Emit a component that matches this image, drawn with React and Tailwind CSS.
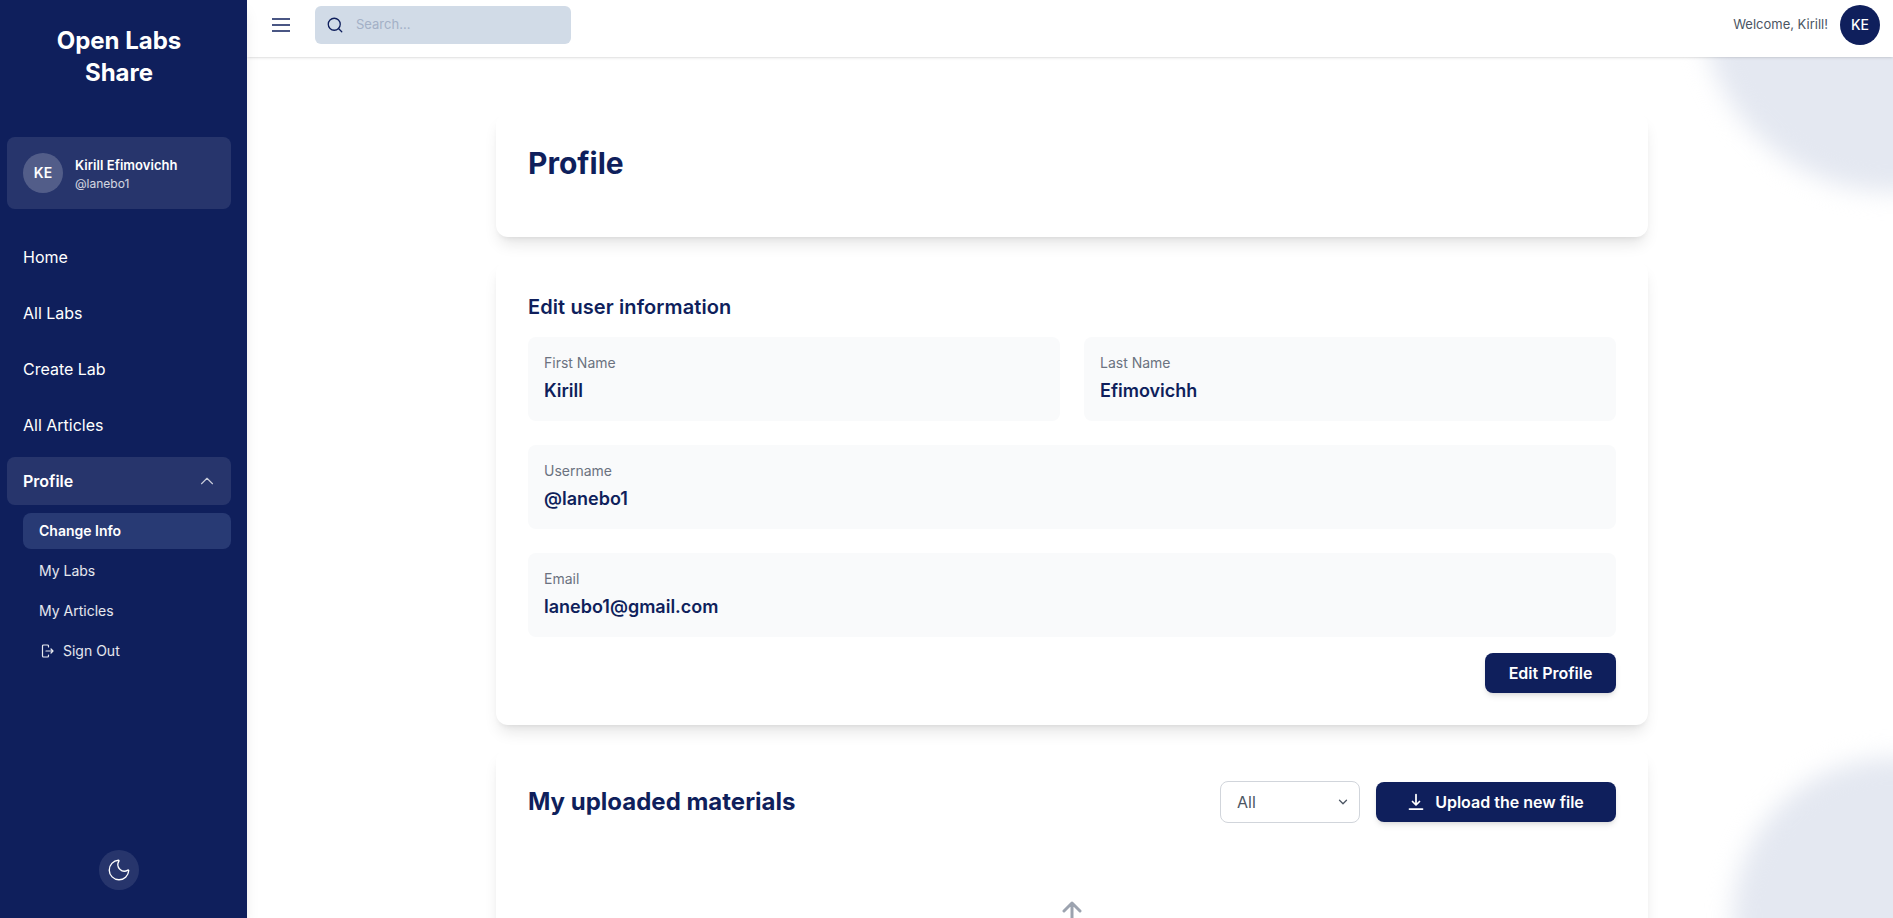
import React from "react";
import { ChevronDown, ChevronUp, Moon, Search } from "lucide-react";

const navItems = ["Home", "All Labs", "Create Lab", "All Articles"];

function Field({ label, value }) {
  return (
    <div className="rounded-lg bg-[#f9fafb] p-4">
      <p className="text-sm leading-5 text-[#6b7280] mb-1">{label}</p>
      <p className="text-lg leading-7 font-semibold text-[#0f1f5c]">{value}</p>
    </div>
  );
}

function Sidebar() {
  return (
    <aside className="w-[247px] shrink-0 h-full flex flex-col bg-[#0f1f5c] pl-[7px] pr-[16px] shadow-lg z-20 text-white">
      <h1 className="pt-[25px] px-8 text-2xl leading-8 font-bold text-center">Open Labs Share</h1>
      <div className="mt-[48px] h-[72px] flex items-center gap-3 rounded-lg bg-white/10 px-4">
        <div className="w-10 h-10 rounded-full bg-white/20 flex items-center justify-center text-sm font-semibold">KE</div>
        <div>
          <p className="text-[13px] leading-5 font-semibold tracking-[0.05px]">Kirill Efimovichh</p>
          <p className="text-xs leading-4 mt-px text-white/80">@lanebo1</p>
        </div>
      </div>
      <nav className="mt-6 flex flex-col gap-2">
        {navItems.map((item) => (
          <a key={item} className="h-12 flex items-center px-4 rounded-lg text-white">{item}</a>
        ))}
        <button className="h-12 flex items-center justify-between px-4 rounded-lg bg-white/10 font-semibold">
          Profile
          <ChevronUp size={22} strokeWidth={1.25} className="-mr-[3px] text-white/75" />
        </button>
      </nav>
      <div className="mt-2 ml-4 flex flex-col gap-1 text-sm">
        <a className="h-9 flex items-center px-4 rounded-lg bg-[#283a74] font-semibold">Change Info</a>
        <a className="h-9 flex items-center px-4 text-white/90">My Labs</a>
        <a className="h-9 flex items-center px-4 text-white/90">My Articles</a>
        <a className="h-9 flex items-center gap-2 px-4 text-white/90">
          <svg width="16" height="16" viewBox="0 0 16 16" fill="none" stroke="currentColor" strokeWidth="1.2" strokeLinecap="round" strokeLinejoin="round">
            <path d="M9.500 4V3a1 1 0 0 0-1-1h-4a1 1 0 0 0-1 1v10a1 1 0 0 0 1 1h4a1 1 0 0 0 1-1v-1" />
            <path d="M7 8h7M12 6l2 2-2 2" />
          </svg>
          Sign Out
        </a>
      </div>
      <div className="mt-auto pb-7 flex justify-center">
        <button className="w-10 h-10 rounded-full bg-white/10 flex items-center justify-center">
          <Moon size={26} strokeWidth={1.25} />
        </button>
      </div>
    </aside>
  );
}

function Header() {
  return (
    <header className="h-[57px] shrink-0 bg-white shadow-sm z-10 flex items-center pt-[5px] pb-[12px] pl-[25px] pr-[13px]">
      <svg width="18" height="14" viewBox="0 0 18 14" stroke="#0f1f5c" strokeWidth="1.500">
        <path d="M0 1h18M0 7h18M0 13h18" />
      </svg>
      <div className="ml-[25px] w-64 h-[38px] rounded-md bg-[#d1dbe7] flex items-center px-3">
        <Search size={18} strokeWidth={1.75} className="-ml-px shrink-0 text-[#0f1f5c]" />
        <input placeholder="Search..." className="ml-[12px] w-full bg-transparent text-[13px] outline-none placeholder:text-[#a3b0c6]" />
      </div>
      <span className="ml-auto text-[13px] text-[#4b5563]">Welcome, Kirill!</span>
      <div className="ml-3 w-10 h-10 rounded-full bg-[#0f1f5c] text-white text-sm font-medium flex items-center justify-center">KE</div>
    </header>
  );
}

export default function App() {
  return (
    <div className="h-screen flex overflow-hidden bg-white font-['Inter',sans-serif]">
      <Sidebar />
      <div className="flex-1 min-w-0 flex flex-col">
        <Header />
        <main className="relative flex-1 overflow-hidden pt-14 pl-[249px] pr-[245px]">
          <div className="absolute -top-[249px] -right-48 w-96 h-96 rounded-full bg-[#e4e8f1] blur-md" />
          <div className="absolute -bottom-40 -right-40 w-80 h-80 rounded-full bg-[#e4e8f1] blur-md" />

          <div className="relative flex flex-col gap-6">
            <section className="bg-white rounded-xl shadow-lg p-8 h-[124px]">
              <h2 className="text-3xl leading-9 font-bold text-[#0f1f5c]">Profile</h2>
            </section>

            <section className="bg-white rounded-xl shadow-lg p-8">
              <h3 className="text-xl leading-7 font-semibold tracking-[0.1px] text-[#0f1f5c] mb-4">Edit user information</h3>
              <div className="grid grid-cols-2 gap-6">
                <Field label="First Name" value="Kirill" />
                <Field label="Last Name" value="Efimovichh" />
                <div className="col-span-2"><Field label="Username" value="@lanebo1" /></div>
                <div className="col-span-2"><Field label="Email" value="lanebo1@gmail.com" /></div>
              </div>
              <div className="mt-4 flex justify-end">
                <button className="w-[131px] h-10 rounded-lg bg-[#0f1f5c] text-white font-semibold shadow-md">Edit Profile</button>
              </div>
            </section>

            <section className="bg-white rounded-xl shadow-lg p-8 pb-24">
              <div className="flex items-center justify-between">
                <h3 className="text-2xl leading-8 font-bold text-[#0f1f5c]">My uploaded materials</h3>
                <div className="flex items-center gap-4">
                  <div className="relative">
                    <select className="appearance-none w-[140px] h-[42px] rounded-lg border border-[#d1d5db] bg-white px-4 text-[#4b5563]">
                      <option>All</option>
                    </select>
                    <ChevronDown size={14} strokeWidth={2.25} className="absolute right-[10px] top-[14px] text-[#4b5563]" />
                  </div>
                  <button className="w-60 h-10 rounded-lg bg-[#0f1f5c] text-white font-semibold shadow-md flex items-center justify-center gap-[11px]">
                    <svg width="16" height="18" viewBox="0 0 16 18" fill="none" stroke="currentColor" strokeWidth="1.75" strokeLinecap="round" strokeLinejoin="round">
                      <path d="M8 1.500v10M4.500 8.500 8 12l3.500-3.500M1.500 16h13" />
                    </svg>
                    Upload the new file
                  </button>
                </div>
              </div>
              <div className="mt-[72px] flex justify-center">
                <svg className="w-12 h-12 text-[#9ca3af]" viewBox="0 0 24 24" fill="none" stroke="currentColor" strokeWidth="1.500" strokeLinecap="round" strokeLinejoin="round">
                  <path d="M4 16v1a3 3 0 0 0 3 3h10a3 3 0 0 0 3-3v-1m-4-8-4-4m0 0L8 8m4-4v12" />
                </svg>
              </div>
            </section>
          </div>
        </main>
      </div>
    </div>
  );
}
